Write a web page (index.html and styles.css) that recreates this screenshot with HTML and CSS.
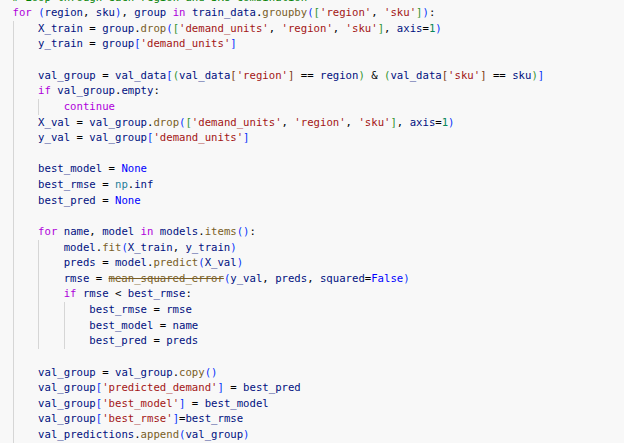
FILE: index.html
```html
<!DOCTYPE html>
<html>
<head>
<meta charset="utf-8">
<link rel="stylesheet" href="styles.css">
</head>
<body>
<div class="code">
<div class="ln"><span class="cm"># Loop through each region and SKU combination</span></div>
<div class="ln"><span class="k">for</span> <span class="b1">(</span><span class="v">region</span>, <span class="v">sku</span><span class="b1">)</span>, <span class="v">group</span> <span class="k">in</span> <span class="v">train_data</span>.<span class="f">groupby</span><span class="b1">(</span><span class="b2">[</span><span class="s">'region'</span>, <span class="s">'sku'</span><span class="b2">]</span><span class="b1">)</span>:</div>
<div class="ln"><span class="ind g"></span><span class="v">X_train</span> = <span class="v">group</span>.<span class="f">drop</span><span class="b1">(</span><span class="b2">[</span><span class="s">'demand_units'</span>, <span class="s">'region'</span>, <span class="s">'sku'</span><span class="b2">]</span>, <span class="v">axis</span>=<span class="n">1</span><span class="b1">)</span></div>
<div class="ln"><span class="ind g"></span><span class="v">y_train</span> = <span class="v">group</span><span class="b1">[</span><span class="s">'demand_units'</span><span class="b1">]</span></div>
<div class="ln"><span class="ind g"></span></div>
<div class="ln"><span class="ind g"></span><span class="v">val_group</span> = <span class="v">val_data</span><span class="b1">[</span><span class="b2">(</span><span class="v">val_data</span><span class="b3">[</span><span class="s">'region'</span><span class="b3">]</span> == <span class="v">region</span><span class="b2">)</span> &amp; <span class="b2">(</span><span class="v">val_data</span><span class="b3">[</span><span class="s">'sku'</span><span class="b3">]</span> == <span class="v">sku</span><span class="b2">)</span><span class="b1">]</span></div>
<div class="ln"><span class="ind g"></span><span class="k">if</span> <span class="v">val_group</span>.<span class="v">empty</span>:</div>
<div class="ln"><span class="ind g"></span><span class="ind g"></span><span class="k">continue</span></div>
<div class="ln"><span class="ind g"></span><span class="v">X_val</span> = <span class="v">val_group</span>.<span class="f">drop</span><span class="b1">(</span><span class="b2">[</span><span class="s">'demand_units'</span>, <span class="s">'region'</span>, <span class="s">'sku'</span><span class="b2">]</span>, <span class="v">axis</span>=<span class="n">1</span><span class="b1">)</span></div>
<div class="ln"><span class="ind g"></span><span class="v">y_val</span> = <span class="v">val_group</span><span class="b1">[</span><span class="s">'demand_units'</span><span class="b1">]</span></div>
<div class="ln"><span class="ind g"></span></div>
<div class="ln"><span class="ind g"></span><span class="v">best_model</span> = <span class="c">None</span></div>
<div class="ln"><span class="ind g"></span><span class="v">best_rmse</span> = <span class="m">np</span>.<span class="v">inf</span></div>
<div class="ln"><span class="ind g"></span><span class="v">best_pred</span> = <span class="c">None</span></div>
<div class="ln"><span class="ind g"></span></div>
<div class="ln"><span class="ind g"></span><span class="k">for</span> <span class="v">name</span>, <span class="v">model</span> <span class="k">in</span> <span class="v">models</span>.<span class="f">items</span><span class="b1">()</span>:</div>
<div class="ln"><span class="ind g"></span><span class="ind g"></span><span class="v">model</span>.<span class="f">fit</span><span class="b1">(</span><span class="v">X_train</span>, <span class="v">y_train</span><span class="b1">)</span></div>
<div class="ln"><span class="ind g"></span><span class="ind g"></span><span class="v">preds</span> = <span class="v">model</span>.<span class="f">predict</span><span class="b1">(</span><span class="v">X_val</span><span class="b1">)</span></div>
<div class="ln"><span class="ind g"></span><span class="ind g"></span><span class="v">rmse</span> = <span class="f dep">mean_squared_error</span><span class="b1">(</span><span class="v">y_val</span>, <span class="v">preds</span>, <span class="v">squared</span>=<span class="c">False</span><span class="b1">)</span></div>
<div class="ln"><span class="ind g"></span><span class="ind g"></span><span class="k">if</span> <span class="v">rmse</span> &lt; <span class="v">best_rmse</span>:</div>
<div class="ln"><span class="ind g"></span><span class="ind g"></span><span class="ind g"></span><span class="v">best_rmse</span> = <span class="v">rmse</span></div>
<div class="ln"><span class="ind g"></span><span class="ind g"></span><span class="ind g"></span><span class="v">best_model</span> = <span class="v">name</span></div>
<div class="ln"><span class="ind g"></span><span class="ind g"></span><span class="ind g"></span><span class="v">best_pred</span> = <span class="v">preds</span></div>
<div class="ln"><span class="ind g"></span></div>
<div class="ln"><span class="ind g"></span><span class="v">val_group</span> = <span class="v">val_group</span>.<span class="f">copy</span><span class="b1">()</span></div>
<div class="ln"><span class="ind g"></span><span class="v">val_group</span><span class="b1">[</span><span class="s">'predicted_demand'</span><span class="b1">]</span> = <span class="v">best_pred</span></div>
<div class="ln"><span class="ind g"></span><span class="v">val_group</span><span class="b1">[</span><span class="s">'best_model'</span><span class="b1">]</span> = <span class="v">best_model</span></div>
<div class="ln"><span class="ind g"></span><span class="v">val_group</span><span class="b1">[</span><span class="s">'best_rmse'</span><span class="b1">]</span>=<span class="v">best_rmse</span></div>
<div class="ln"><span class="ind g"></span><span class="v">val_predictions</span>.<span class="f">append</span><span class="b1">(</span><span class="v">val_group</span><span class="b1">)</span></div>
</div>
</body>
</html>
```

FILE: styles.css
```css
html, body {
  margin: 0;
  padding: 0;
  background: #f8f8f8;
  overflow: hidden;
}
.code {
  margin-top: -10.4px;
  padding-left: 12.5px;
  font-family: "DejaVu Sans Mono", "Liberation Mono", monospace;
  font-size: 10.65px;
  color: #000000;
}
.ln {
  height: 15.63px;
  line-height: 15.63px;
  white-space: pre;
}
.ind {
  display: inline-block;
  width: 4ch;
  height: 15.63px;
  vertical-align: top;
}
.ind.g {
  box-shadow: inset 1px 0 0 #d6d6d6;
}
.cm { color: #008000; }
.k { color: #af00db; }
.v { color: #001080; }
.f { color: #795e26; }
.s { color: #a31515; }
.n { color: #098658; }
.c { color: #0000ff; }
.m { color: #267f99; }
.b1 { color: #0431fa; }
.b2 { color: #319331; }
.b3 { color: #7b3814; }
.dep { text-decoration: line-through; text-decoration-color: #795e26; }
```
